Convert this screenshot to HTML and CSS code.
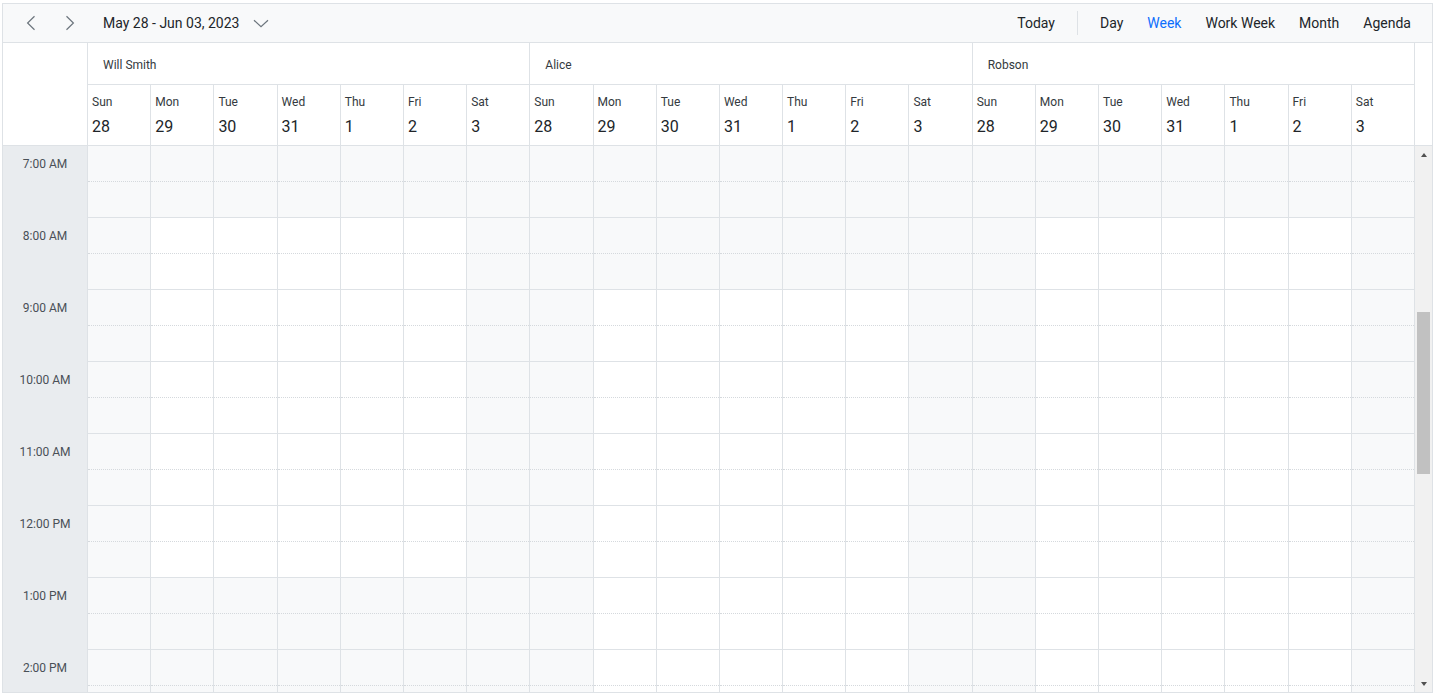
FILE: index.html
```html
<!DOCTYPE html>
<html lang="en">
<head>
  <meta charset="UTF-8">
  <title>Scheduler</title>
  <link rel="stylesheet" href="styles.css">
</head>
<body>

  <div class="scheduler">
    <div class="toolbar">
      <div class="toolbar-left">
        <button class="icon-btn">
          <svg width="10" height="16" viewBox="0 0 10 16"><path d="M8.5 1.2 L1.6 8 L8.5 14.8" fill="none" stroke="#6c757d" stroke-width="1.2"/></svg>
        </button>
        <button class="icon-btn next">
          <svg width="10" height="16" viewBox="0 0 10 16"><path d="M1.5 1.2 L8.4 8 L1.5 14.8" fill="none" stroke="#6c757d" stroke-width="1.2"/></svg>
        </button>
        <button class="date-range">
          <span>May 28 - Jun 03, 2023</span>
          <svg width="16" height="9" viewBox="0 0 16 9"><path d="M1 1.2 L8 7.8 L15 1.2" fill="none" stroke="#6c757d" stroke-width="1.2"/></svg>
        </button>
      </div>
      <div class="toolbar-right">
        <button class="tb-btn">Today</button>
        <span class="tb-sep"></span>
        <button class="tb-btn">Day</button>
        <button class="tb-btn active">Week</button>
        <button class="tb-btn">Work Week</button>
        <button class="tb-btn">Month</button>
        <button class="tb-btn">Agenda</button>
      </div>
    </div>

    <div class="header">
      <div class="corner"></div>
      <div class="header-days">
        <div class="resources">
          <div class="resource">Will Smith</div>
          <div class="resource">Alice</div>
          <div class="resource">Robson</div>
        </div>
        <div class="dates" id="dates"></div>
      </div>
      <div class="gutter"></div>
    </div>

    <div class="body">
      <div class="times" id="times"></div>
      <div class="days" id="days"></div>
      <div class="scrollbar">
        <div class="sb-arrow"><span class="tri up"></span></div>
        <div class="sb-thumb"></div>
        <div class="sb-fill"></div>
        <div class="sb-arrow"><span class="tri down"></span></div>
      </div>
    </div>
  </div>

  <script src="script.js"></script>
</body>
</html>
```

FILE: styles.css
```css
* {
  box-sizing: border-box;
}

body {
  margin: 3px 1px 0 2px;
  background: #fff;
  color: #212529;
  font-family: Roboto, "Liberation Sans", sans-serif;
}

button {
  font-family: inherit;
  color: inherit;
  border: 0;
  background: none;
  padding: 0;
  cursor: pointer;
}

.scheduler {
  height: 690px;
  border: 1px solid #dee2e6;
  display: flex;
  flex-direction: column;
  overflow: hidden;
}

/* toolbar */
.toolbar {
  flex: none;
  height: 39px;
  background: #f8f9fa;
  border-bottom: 1px solid #dee2e6;
  display: flex;
  align-items: center;
  justify-content: space-between;
  padding: 0 9px 0 11px;
}

.toolbar-left,
.toolbar-right {
  display: flex;
  align-items: center;
}

.icon-btn {
  width: 34px;
  height: 30px;
  display: flex;
  align-items: center;
  justify-content: center;
}

.icon-btn.next {
  margin-left: 5px;
}

.date-range {
  margin-left: 16px;
  display: flex;
  align-items: center;
  gap: 14px;
  font-size: 14px;
}

.tb-btn {
  font-size: 14px;
  padding: 0 12px;
  height: 30px;
}

.tb-btn.active {
  color: #0d6efd;
}

.tb-sep {
  width: 1px;
  height: 24px;
  background: #dee2e6;
  margin: 0 10px;
}

/* header */
.header {
  flex: none;
  display: flex;
  border-bottom: 1px solid #dee2e6;
}

.corner {
  width: 84px;
}

.header-days {
  width: 1328px;
  border-right: 1px solid #dee2e6;
}

.gutter {
  flex: 1;
}

.resources {
  height: 42px;
  display: grid;
  grid-template-columns: repeat(3, 1fr);
  border-bottom: 1px solid #dee2e6;
}

.resource {
  border-left: 1px solid #dee2e6;
  padding: 3px 0 0 15px;
  display: flex;
  align-items: center;
  font-size: 12px;
  color: #343a40;
}

.dates {
  height: 60px;
  display: grid;
  grid-template-columns: repeat(21, 1fr);
}

.date-cell {
  border-left: 1px solid #dee2e6;
  padding: 9px 4px 0;
}

.day-name {
  font-size: 12px;
  line-height: 16px;
  color: #343a40;
}

.day-num {
  font-size: 16px;
  line-height: 20px;
  margin-top: 7px;
}

/* work cells */
.body {
  flex: 1;
  display: flex;
  overflow: hidden;
}

.times {
  width: 84px;
  flex: none;
  background: #e9ecef;
}

.time-label {
  height: 72px;
}

.time-label span {
  height: 36px;
  display: flex;
  align-items: center;
  justify-content: center;
  font-size: 12px;
  color: #495057;
}

.days {
  width: 1328px;
  flex: none;
  border-right: 1px solid #dee2e6;
  display: grid;
  grid-template-columns: repeat(21, 1fr);
  align-content: start;
}

.day-col {
  border-left: 1px solid #dee2e6;
}

.slot {
  height: 36px;
  border-bottom: 1px dotted #d5d9dd;
}

.slot.hour-end {
  border-bottom: 1px solid #dee2e6;
}

.slot.off {
  background: #f8f9fa;
}

/* scrollbar */
.scrollbar {
  flex: 1;
  background: #f1f1f1;
  display: flex;
  flex-direction: column;
}

.sb-arrow {
  height: 17px;
  display: flex;
  align-items: center;
  justify-content: center;
}

.tri {
  width: 0;
  height: 0;
  border-left: 3.5px solid transparent;
  border-right: 3.5px solid transparent;
}

.tri.up {
  border-bottom: 4px solid #505050;
}

.tri.down {
  border-top: 4px solid #505050;
}

.sb-thumb {
  height: 162px;
  margin: 149px 2px 0;
  background: #c1c1c1;
}

.sb-fill {
  flex: 1;
}
```

FILE: script.js
```js
const resources = [
  { name: "Will Smith", start: 8, end: 13 },
  { name: "Alice", start: 9, end: 18 },
  { name: "Robson", start: 8, end: 18 }
];
const dayNames = ["Sun", "Mon", "Tue", "Wed", "Thu", "Fri", "Sat"];
const dayNums = [28, 29, 30, 31, 1, 2, 3];
const hours = ["7:00 AM", "8:00 AM", "9:00 AM", "10:00 AM", "11:00 AM", "12:00 PM", "1:00 PM", "2:00 PM"];
const firstHour = 7;

const dates = document.getElementById("dates");
const times = document.getElementById("times");
const days = document.getElementById("days");

hours.forEach(h => {
  const row = document.createElement("div");
  row.className = "time-label";
  row.innerHTML = `<span>${h}</span>`;
  times.appendChild(row);
});

resources.forEach(res => {
  dayNames.forEach((name, d) => {
    const cell = document.createElement("div");
    cell.className = "date-cell";
    cell.innerHTML = `<div class="day-name">${name}</div><div class="day-num">${dayNums[d]}</div>`;
    dates.appendChild(cell);

    const col = document.createElement("div");
    col.className = "day-col";
    for (let i = 0; i < hours.length * 2; i++) {
      const t = firstHour + i / 2;
      const working = d > 0 && d < 6 && t >= res.start && t < res.end;
      const slot = document.createElement("div");
      slot.className = "slot" + (i % 2 ? " hour-end" : "") + (working ? "" : " off");
      col.appendChild(slot);
    }
    days.appendChild(col);
  });
});
```
